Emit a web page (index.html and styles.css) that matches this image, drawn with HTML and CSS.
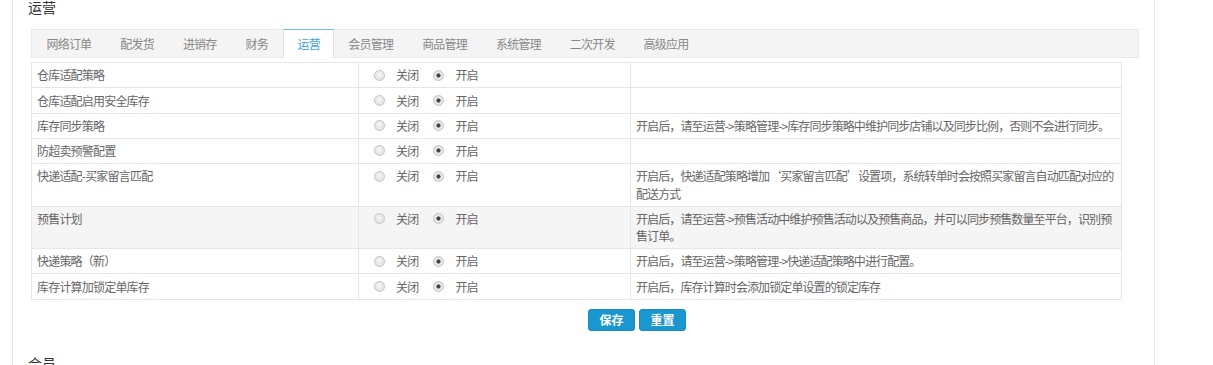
FILE: index.html
```html
<!DOCTYPE html>
<html lang="zh-CN">
<head>
    <meta charset="UTF-8">
    <title>系统设置</title>
    <link rel="stylesheet" href="styles.css">
</head>
<body>
    <div class="panel">
        <h3 class="section-title">运营</h3>

        <ul class="tabs">
            <li>网络订单</li>
            <li>配发货</li>
            <li>进销存</li>
            <li>财务</li>
            <li class="active">运营</li>
            <li>会员管理</li>
            <li>商品管理</li>
            <li>系统管理</li>
            <li>二次开发</li>
            <li>高级应用</li>
        </ul>

        <table class="setting-table">
            <colgroup>
                <col class="col-name">
                <col class="col-switch">
                <col>
            </colgroup>
            <tr>
                <td>仓库适配策略</td>
                <td><span class="radio">关闭</span><span class="radio on">开启</span></td>
                <td class="desc"></td>
            </tr>
            <tr>
                <td>仓库适配启用安全库存</td>
                <td><span class="radio">关闭</span><span class="radio on">开启</span></td>
                <td class="desc"></td>
            </tr>
            <tr>
                <td>库存同步策略</td>
                <td><span class="radio">关闭</span><span class="radio on">开启</span></td>
                <td class="desc">开启后，请至运营-&gt;策略管理-&gt;库存同步策略中维护同步店铺以及同步比例，否则不会进行同步。</td>
            </tr>
            <tr>
                <td>防超卖预警配置</td>
                <td><span class="radio">关闭</span><span class="radio on">开启</span></td>
                <td class="desc"></td>
            </tr>
            <tr>
                <td>快递适配-买家留言匹配</td>
                <td><span class="radio">关闭</span><span class="radio on">开启</span></td>
                <td class="desc">开启后，快递适配策略增加‘买家留言匹配’设置项，系统转单时会按照买家留言自动匹配对应的配送方式</td>
            </tr>
            <tr class="shaded">
                <td>预售计划</td>
                <td><span class="radio">关闭</span><span class="radio on">开启</span></td>
                <td class="desc">开启后，请至运营-&gt;预售活动中维护预售活动以及预售商品，并可以同步预售数量至平台，识别预售订单。</td>
            </tr>
            <tr>
                <td>快递策略（新）</td>
                <td><span class="radio">关闭</span><span class="radio on">开启</span></td>
                <td class="desc">开启后，请至运营-&gt;策略管理-&gt;快递适配策略中进行配置。</td>
            </tr>
            <tr>
                <td>库存计算加锁定单库存</td>
                <td><span class="radio">关闭</span><span class="radio on">开启</span></td>
                <td class="desc">开启后，库存计算时会添加锁定单设置的锁定库存</td>
            </tr>
        </table>

        <div class="actions">
            <button type="button" class="btn">保存</button>
            <button type="button" class="btn">重置</button>
        </div>

        <h3 class="section-title">会员</h3>
    </div>
</body>
</html>
```

FILE: styles.css
```css
body {
    margin: 0;
    font-family: "Noto Sans CJK SC", "Noto Sans", sans-serif;
    font-size: 12px;
    color: #666;
    background: #fff;
    overflow: hidden;
}

.panel {
    margin-left: 12px;
    width: 1111px;
    min-height: 100vh;
    padding: 0 15px;
    border-left: 1px solid #e6e6e6;
    border-right: 1px solid #e6e6e6;
}

.section-title {
    margin: -2px 0 0;
    font-size: 14px;
    font-weight: normal;
    line-height: 18px;
    color: #333;
}

.tabs {
    display: flex;
    list-style: none;
    margin: 13px 0 0 3px;
    padding: 0;
    width: 1106px;
    height: 27px;
    background: #f4f4f4;
    border: 1px solid #e8e8e8;
}

.tabs li {
    padding: 0 14.5px;
    line-height: 27px;
    letter-spacing: -0.8px;
    color: #888;
    cursor: pointer;
}

.tabs li.active {
    position: relative;
    top: -1px;
    height: 28px;
    padding: 0 13px;
    margin-left: 1px;
    line-height: 28px;
    background: #fff;
    color: #3da3d9;
    border-top: 1px solid #6cbde6;
    border-left: 1px solid #e2e2e2;
    border-right: 1px solid #e2e2e2;
}

.setting-table {
    margin: 4px 0 0 3px;
    width: 1091px;
    border-collapse: collapse;
    table-layout: fixed;
}

.setting-table .col-name {
    width: 327px;
}

.setting-table .col-switch {
    width: 272px;
}

.setting-table td {
    padding: 3.25px 5px;
    line-height: 17.5px;
    letter-spacing: -0.8px;
    vertical-align: top;
    border: 1px solid #e6e6e6;
}

.setting-table td.desc {
    padding-right: 2px;
    letter-spacing: -0.9px;
}

.setting-table tr.shaded td {
    background: #f5f5f5;
}

.setting-table td:nth-child(2) {
    padding-left: 15px;
}

.radio {
    display: inline-flex;
    align-items: center;
    margin-right: 15px;
}

.radio::before {
    content: "";
    width: 9px;
    height: 9px;
    margin-right: 11px;
    border: 1px solid #c6c6c6;
    border-radius: 50%;
    background: radial-gradient(circle at 50% 40%, #f6f6f6 0, #dadada 100%);
}

.radio.on::before {
    background: radial-gradient(circle, #444 0, #444 1.8px, #eee 2.4px, #d6d6d6 100%);
}

.actions {
    display: flex;
    gap: 4px;
    margin: 9px 0 25px 560px;
}

.btn {
    width: 47px;
    height: 22px;
    padding: 0;
    font-family: inherit;
    font-size: 12px;
    font-weight: bold;
    color: #fff;
    background: #1b97cf;
    border: 1px solid #1a8cc2;
    border-radius: 3px;
    cursor: pointer;
}

.btn:hover {
    background: #1689be;
}
```
